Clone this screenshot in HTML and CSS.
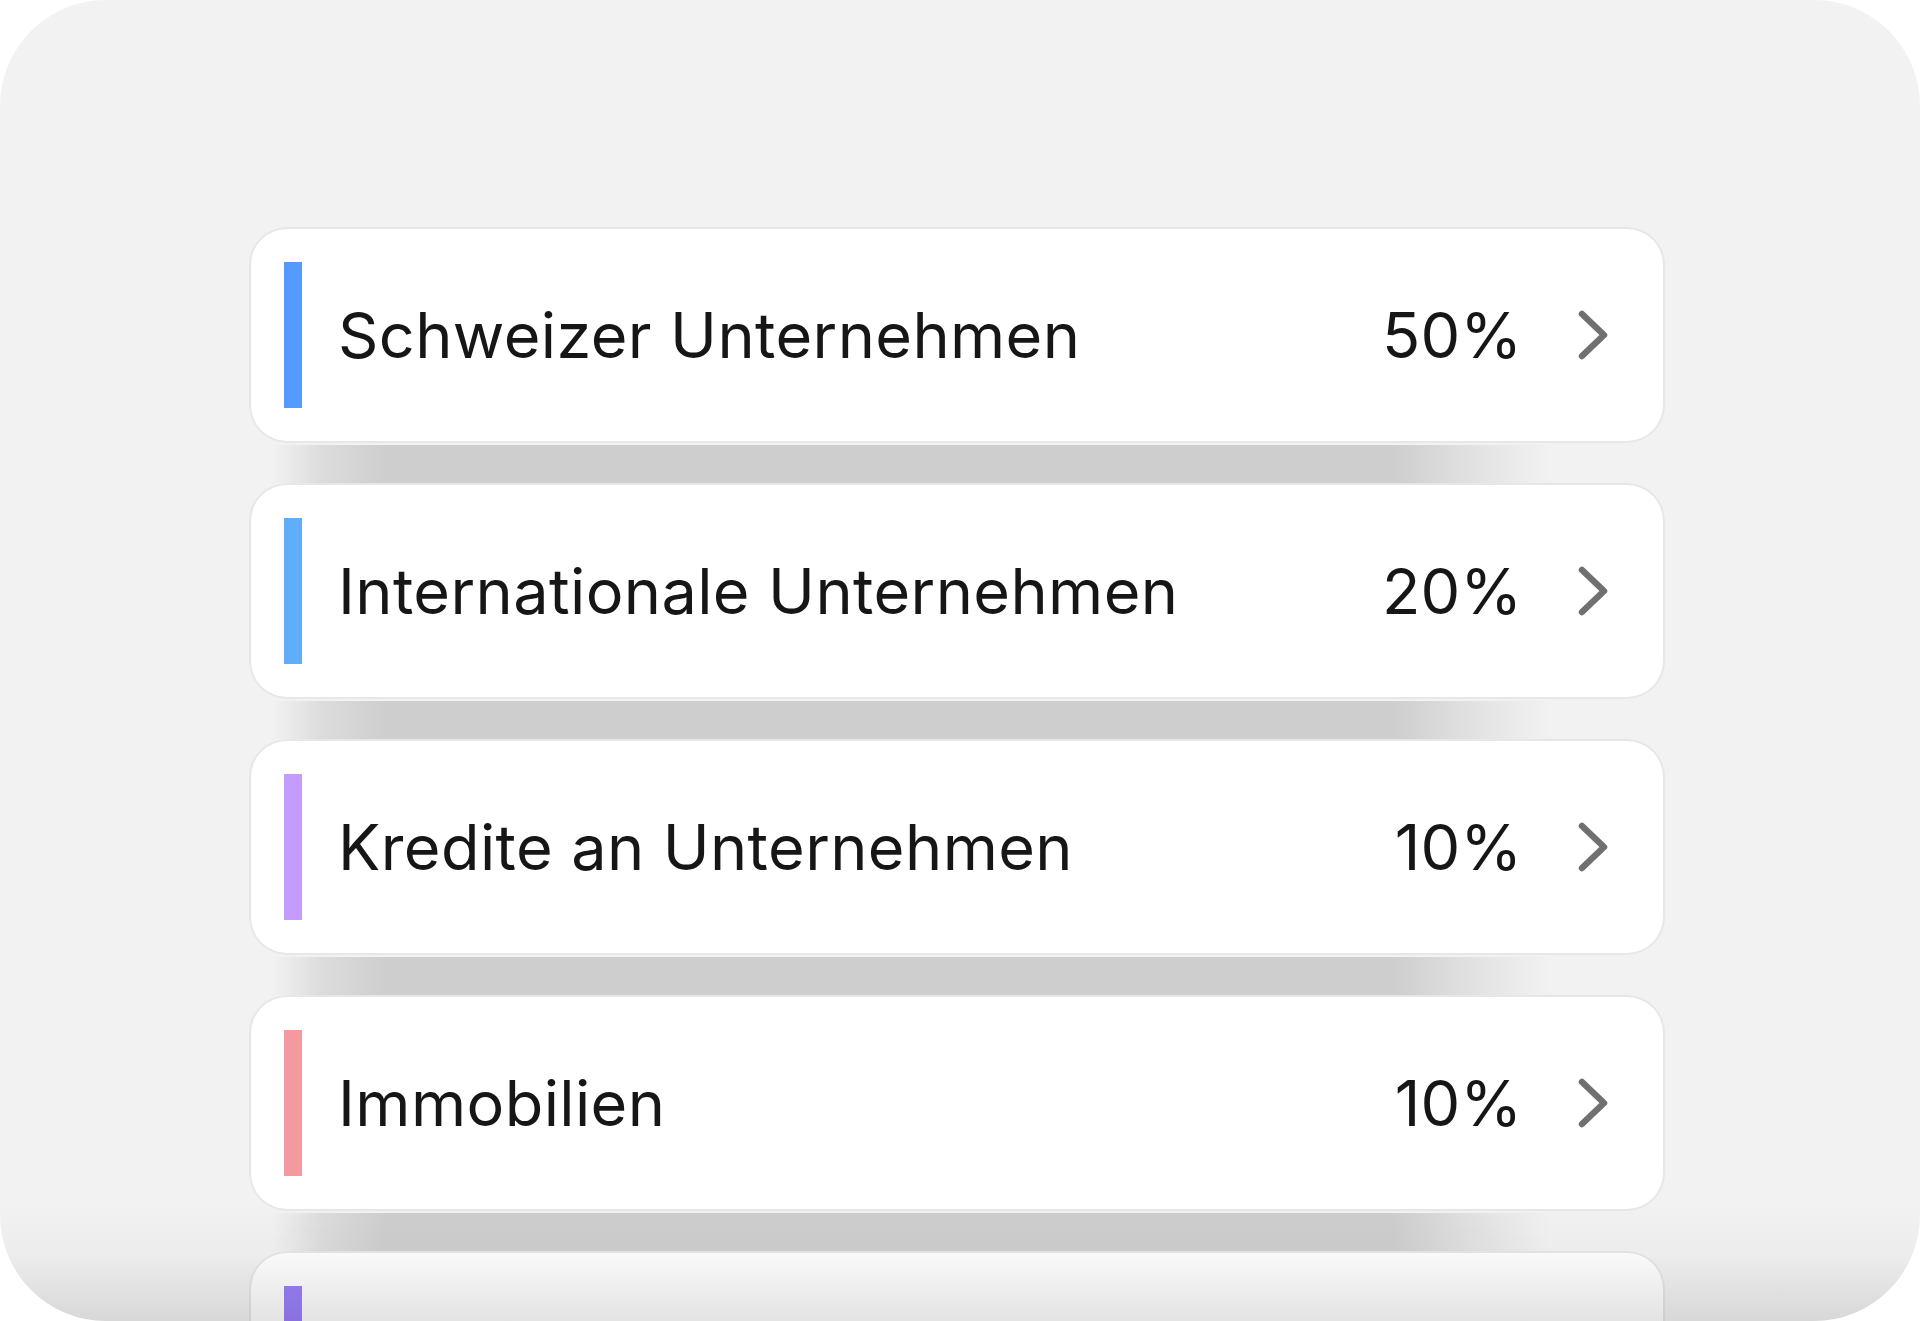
FILE: index.html
```html
<!DOCTYPE html>
<html lang="de">
<head>
<meta charset="utf-8">
<title>Allocation</title>
<link rel="stylesheet" href="styles.css">
</head>
<body>
<div class="frame">
  <div class="list">
    <div class="card">
      <span class="bar bar-blue"></span>
      <span class="label">Schweizer Unternehmen</span>
      <span class="value">50%</span>
      <svg class="chev" viewBox="0 0 30 50" width="30" height="50"><path d="M4 4 L26 25 L4 46" fill="none" stroke="#707070" stroke-width="6.5" stroke-linecap="round" stroke-linejoin="round"/></svg>
    </div>
    <div class="card">
      <span class="bar bar-sky"></span>
      <span class="label">Internationale Unternehmen</span>
      <span class="value">20%</span>
      <svg class="chev" viewBox="0 0 30 50" width="30" height="50"><path d="M4 4 L26 25 L4 46" fill="none" stroke="#707070" stroke-width="6.5" stroke-linecap="round" stroke-linejoin="round"/></svg>
    </div>
    <div class="card">
      <span class="bar bar-lavender"></span>
      <span class="label">Kredite an Unternehmen</span>
      <span class="value">10%</span>
      <svg class="chev" viewBox="0 0 30 50" width="30" height="50"><path d="M4 4 L26 25 L4 46" fill="none" stroke="#707070" stroke-width="6.5" stroke-linecap="round" stroke-linejoin="round"/></svg>
    </div>
    <div class="card">
      <span class="bar bar-pink"></span>
      <span class="label">Immobilien</span>
      <span class="value">10%</span>
      <svg class="chev" viewBox="0 0 30 50" width="30" height="50"><path d="M4 4 L26 25 L4 46" fill="none" stroke="#707070" stroke-width="6.5" stroke-linecap="round" stroke-linejoin="round"/></svg>
    </div>
    <div class="card card-top">
      <span class="bar bar-purple"></span>
    </div>
  </div>
</div>
</body>
</html>
```
FILE: styles.css
```css
html, body {
  margin: 0;
  padding: 0;
  background: #ffffff;
}

.frame {
  position: relative;
  width: 1920px;
  height: 1321px;
  border-radius: 106px;
  background: #f2f2f2;
  overflow: hidden;
  font-family: Inter, "Liberation Sans", sans-serif;
  color: #161616;
}

.frame::after {
  content: "";
  position: absolute;
  left: 0;
  right: 0;
  bottom: 0;
  height: 120px;
  background: linear-gradient(to bottom, rgba(0,0,0,0) 0%, rgba(0,0,0,0.025) 45%, rgba(0,0,0,0.11) 100%);
  pointer-events: none;
  z-index: 5;
}

.list {
  display: flex;
  flex-direction: column;
  gap: 44px;
  width: 1412px;
  padding: 229px 0 0 251px;
}

.card {
  position: relative;
  flex: 0 0 auto;
  display: flex;
  align-items: center;
  box-sizing: border-box;
  height: 212px;
  padding: 0 55px 0 33px;
  background: #ffffff;
  border-radius: 36px;
  box-shadow: 0 0 0 2px #e7e7e7;
}

.card-top {
  align-items: flex-start;
  padding-top: 33px;
}

.card::after {
  content: "";
  position: absolute;
  left: 0;
  right: 0;
  top: calc(100% + 4px);
  height: 38px;
  background: linear-gradient(to right,
    rgba(206,206,206,0) 1.5%,
    rgba(206,206,206,0.6) 5%,
    #cecece 9.5%,
    #cecece 81%,
    rgba(206,206,206,0.5) 86%,
    rgba(206,206,206,0) 92%);
}

.bar {
  flex: 0 0 auto;
  width: 18px;
  height: 146px;
  margin-right: 36px;
}

.bar-blue { background: #559bff; }
.bar-sky { background: #62adf9; }
.bar-lavender { background: #c59bfd; }
.bar-pink { background: #f4999e; }
.bar-purple { background: #9a80fa; }

.label {
  flex: 1 1 auto;
  font-size: 63px;
  font-weight: 400;
  line-height: 1;
  letter-spacing: 0.4px;
}

.value {
  flex: 0 0 auto;
  font-size: 63px;
  font-weight: 400;
  line-height: 1;
  margin-right: 56px;
}

.chev {
  flex: 0 0 auto;
  display: block;
}
```
